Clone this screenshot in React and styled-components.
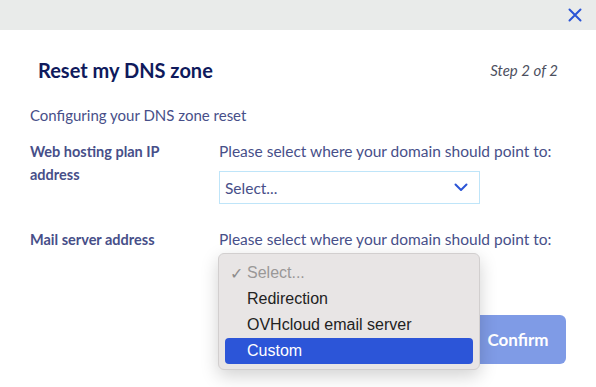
import React from 'react';
import styled, { createGlobalStyle } from 'styled-components';

const GlobalStyle = createGlobalStyle`
    html, body {
        margin: 0;
        padding: 0;
        background: #fff;
    }
    body {
        font-family: Lato, "Noto Sans", sans-serif;
    }
`;

const App = () => {
    return (
        <>
            <GlobalStyle />
            <Page>
                <TopBar>
                    <CloseButton aria-label='Close'>
                        <svg width='14' height='14' viewBox='0 0 14 14'>
                            <path d='M1.5 1.5 L12.5 12.5 M12.5 1.5 L1.5 12.5' stroke='#2b55d6' strokeWidth='2' strokeLinecap='round' />
                        </svg>
                    </CloseButton>
                </TopBar>
                <Body>
                    <Header>
                        <Title>Reset my DNS zone</Title>
                        <Step>Step 2 of 2</Step>
                    </Header>
                    <Intro>Configuring your DNS zone reset</Intro>
                    <Row>
                        <Label>Web hosting plan IP address</Label>
                        <Field>
                            <Hint>Please select where your domain should point to:</Hint>
                            <SelectBox>
                                <span>Select...</span>
                                <Chevron />
                            </SelectBox>
                        </Field>
                    </Row>
                    <Row>
                        <Label>Mail server address</Label>
                        <Field>
                            <Hint>Please select where your domain should point to:</Hint>
                            {/* the native list is open and covers this select */}
                            <SelectBox open />
                            <Popup>
                                <Option muted>
                                    <Check>✓</Check>
                                    <span>Select...</span>
                                </Option>
                                <Option>
                                    <Check />
                                    <span>Redirection</span>
                                </Option>
                                <Option>
                                    <Check />
                                    <span>OVHcloud email server</span>
                                </Option>
                                <Option selected>
                                    <Check />
                                    <span>Custom</span>
                                </Option>
                            </Popup>
                        </Field>
                    </Row>
                    <Footer>
                        <ConfirmButton>Confirm</ConfirmButton>
                    </Footer>
                </Body>
            </Page>
        </>
    );
};

const Chevron = () => (
    <svg width='14' height='9' viewBox='0 0 14 9'>
        <path d='M1.5 1.5 L7 7 L12.5 1.5' fill='none' stroke='#2b55d6' strokeWidth='2' strokeLinecap='round' strokeLinejoin='round' />
    </svg>
);

export default App;

const Page = styled.div`
    width: 596px;
    height: 387px;
    overflow: hidden;
    background: #fff;
`;

const TopBar = styled.div`
    height: 30px;
    background-color: #e9ebea;
    display: flex;
    align-items: center;
    justify-content: flex-end;
    padding-right: 12px;
`;

const CloseButton = styled.button`
    border: none;
    background: none;
    padding: 0;
    width: 18px;
    height: 18px;
    display: flex;
    align-items: center;
    justify-content: center;
    cursor: pointer;
`;

const Body = styled.div`
    padding: 28px 30px 0 30px;
`;

const Header = styled.div`
    display: flex;
    align-items: center;
    justify-content: space-between;
    padding: 0 8px;
`;

const Title = styled.h2`
    margin: 0;
    font-size: 20px;
    font-weight: 700;
    color: #0f1a5c;
`;

const Step = styled.span`
    font-size: 15px;
    font-style: italic;
    color: #4d5060;
`;

const Intro = styled.p`
    margin: 24px 0 0;
    font-size: 15px;
    color: #474f89;
`;

const Row = styled.div`
    display: grid;
    grid-template-columns: 189px 261px;
    margin-top: 16px;

    & + & {
        margin-top: 24px;
    }
`;

const Label = styled.div`
    font-size: 14.5px;
    font-weight: 700;
    line-height: 23px;
    color: #474f89;
    padding-right: 20px;
`;

const Field = styled.div`
    position: relative;
    display: flex;
    flex-direction: column;
    gap: 8px;
`;

const Hint = styled.div`
    font-size: 15.5px;
    line-height: 23px;
    color: #474f89;
    white-space: nowrap;
`;

const SelectBox = styled.div`
    box-sizing: border-box;
    width: 261px;
    height: 33px;
    border: 1px solid #bfe5f9;
    display: flex;
    align-items: center;
    justify-content: space-between;
    padding: 0 11px 0 5px;
    font-size: 15.5px;
    color: #474f89;
`;

const Popup = styled.div`
    position: absolute;
    left: -1px;
    top: 25px;
    width: 262px;
    box-sizing: border-box;
    padding: 6px 6px 5px;
    background: #e8e5e5;
    border: 1px solid #d2cfcf;
    border-radius: 6px;
    box-shadow: 0 6px 18px rgba(0, 0, 0, 0.18);
    font-family: "Liberation Sans", Arial, sans-serif;
    font-size: 16px;
    z-index: 2;
`;

const Option = styled.div`
    display: flex;
    align-items: center;
    height: 26px;
    padding-left: 5px;
    border-radius: 4px;
    color: ${(p) => (p.selected ? '#fff' : p.muted ? '#9a9898' : '#222')};
    background: ${(p) => (p.selected ? '#2c55d8' : 'transparent')};
`;

const Check = styled.span`
    display: inline-block;
    width: 17px;
    font-size: 16px;
    color: #8e8c8c;
`;

const Footer = styled.div`
    display: flex;
    justify-content: flex-end;
    margin-top: 23px;
`;

const ConfirmButton = styled.button`
    width: 96px;
    height: 49px;
    border: none;
    border-radius: 6px;
    background-color: #7f9be6;
    color: #fff;
    font-family: Lato, "Noto Sans", sans-serif;
    font-size: 17px;
    font-weight: 700;
`;
